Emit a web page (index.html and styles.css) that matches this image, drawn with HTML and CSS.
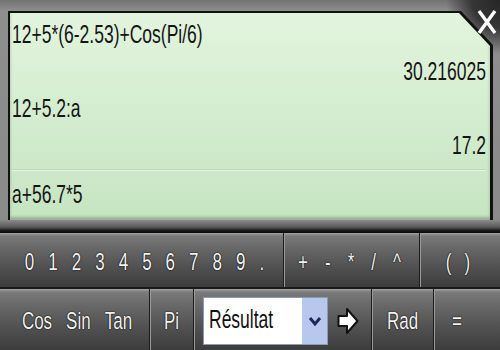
FILE: index.html
```html
<!DOCTYPE html>
<html>
<head>
<meta charset="utf-8">
<link rel="stylesheet" href="styles.css">
</head>
<body>
<div class="app">
  <div class="top">
    <div class="screen-border">
      <div class="screen">
        <div class="line"><span class="t">12+5*(6-2.53)+Cos(Pi/6)</span></div>
        <div class="line res"><span class="t">30.216025</span></div>
        <div class="line"><span class="t">12+5.2:a</span></div>
        <div class="line res"><span class="t">17.2</span></div>
        <div class="line input"><span class="t">a+56.7*5</span></div>
      </div>
    </div>
    <div class="close">
      <svg width="20" height="26" viewBox="0 0 20 26"><path d="M2 2 L18 24 M18 2 L2 24" stroke="#fff" stroke-width="3.4" fill="none"/></svg>
    </div>
  </div>
  <div class="keys row1">
    <div class="key digits"><span class="t">0</span><span class="t">1</span><span class="t">2</span><span class="t">3</span><span class="t">4</span><span class="t">5</span><span class="t">6</span><span class="t">7</span><span class="t">8</span><span class="t">9</span><span class="t">.</span></div>
    <div class="key ops"><span class="t">+</span><span class="t">-</span><span class="t">*</span><span class="t">/</span><span class="t">^</span></div>
    <div class="key parens"><span class="t">(</span><span class="t">)</span></div>
  </div>
  <div class="keys row2">
    <div class="key trig"><span class="t">Cos</span><span class="t">Sin</span><span class="t">Tan</span></div>
    <div class="key"><span class="t">Pi</span></div>
    <div class="key selcell">
      <div class="select">
        <span class="t dark">Résultat</span>
        <span class="drop"><svg width="14" height="12" viewBox="0 0 14 12"><path d="M2 3 L7 9 L12 3" stroke="#1c2a5a" stroke-width="3" fill="none"/></svg></span>
      </div>
      <svg class="go" width="22" height="28" viewBox="0 0 22 28"><path d="M1.5 9 H10 V2 L20.5 14 L10 26 V19 H1.5 Z" fill="#fff" stroke="#111" stroke-width="2" stroke-linejoin="round"/></svg>
    </div>
    <div class="key"><span class="t">Rad</span></div>
    <div class="key eq"><span class="t">=</span></div>
  </div>
</div>
</body>
</html>
```
FILE: styles.css
```css
* { box-sizing: border-box; }
html, body { margin: 0; padding: 0; }
body {
  width: 500px;
  height: 350px;
  overflow: hidden;
  background: #555;
  font-family: "Liberation Sans", Arial, sans-serif;
}
.app { width: 500px; height: 350px; display: flex; flex-direction: column; }

.top {
  position: relative;
  height: 232px;
  padding: 11px 7px 12px 8px;
  background:
    radial-gradient(circle at 100% 0, #262626 0, #363636 28px, rgba(70,70,70,0) 54px),
    linear-gradient(to bottom, #727272 0, #8e8e8e 11px, #8a8a8a 220px, #5a5a5a 227px, #111 231px);
}
.screen-border {
  height: 209px;
  padding: 2px 3px 0 2px;
  background: #111;
  clip-path: polygon(0 0, calc(100% - 32px) 0, 100% 34px, 100% 100%, 0 100%);
}
.screen {
  height: 207px;
  padding: 4px 4px 0 2px;
  background: linear-gradient(to bottom, #e3f4de 0%, #d6eed2 40%, #c6e4c2 100%);
  clip-path: polygon(0 0, calc(100% - 31px) 0, 100% 33px, 100% 100%, 0 100%);
  box-shadow: inset 0 -3px 3px rgba(90,110,90,0.45);
  color: #151515;
  font-size: 17.5px;
}
.line {
  height: 37px;
  display: flex;
  align-items: center;
}
.line.res { justify-content: flex-end; }
.line.input {
  margin-top: 5px;
  height: 50px;
  border-top: 1px solid #e4f4e0;
  box-shadow: 0 -1px 0 #bdd9b9;
}
.t { display: inline-block; transform: scaleY(1.42); line-height: 1; }

.close {
  position: absolute;
  top: 9px;
  right: 3px;
  width: 20px;
  height: 26px;
}
.close svg { display: block; }

.keys {
  display: grid;
  border-top: 1px solid #0c0c0c;
}
.row1 {
  height: 57px;
  grid-template-columns: 283px 136px 81px;
  border-bottom: 2px solid #1a1a1a;
}
.row1 .key { padding-top: 5px; }
.row2 {
  height: 61px;
  grid-template-columns: 149px 44px 178px 62px 67px;
  border-top: none;
}
.key {
  display: flex;
  align-items: center;
  justify-content: center;
  color: #f2f2f2;
  font-size: 17px;
  text-shadow: 0 0 1px #000, 0 0 1px #000;
  background: linear-gradient(to bottom, #a4a4a4 0, #7a7a7a 3px, #666 30%, #505050 65%, #3c3c3c 100%);
  border-left: 1px solid #1c1c1c;
  box-shadow: inset 1px 0 0 #9a9a9a;
}
.key:first-child { border-left: none; box-shadow: none; }
.digits { gap: 14px; padding-left: 6px; }
.ops { gap: 17px; padding-right: 4px; }
.parens { gap: 13px; padding-right: 4px; }
.trig { gap: 14px; padding-left: 5px; }
.row2 .key { padding-top: 3px; }
.row2 .eq { padding-right: 20px; }

.selcell { justify-content: flex-start; padding-left: 9px; gap: 9px; }
.select {
  width: 125px;
  height: 48px;
  background: #fff;
  border: 1px solid #8c9ab8;
  display: flex;
  align-items: center;
  justify-content: space-between;
  padding-left: 5px;
  text-shadow: none;
}
.dark { color: #111; font-size: 17.5px; }
.drop {
  width: 25px;
  height: 100%;
  background: #b8c7ee;
  display: flex;
  align-items: center;
  justify-content: center;
}
.drop svg, .go { display: block; flex: none; }
```
